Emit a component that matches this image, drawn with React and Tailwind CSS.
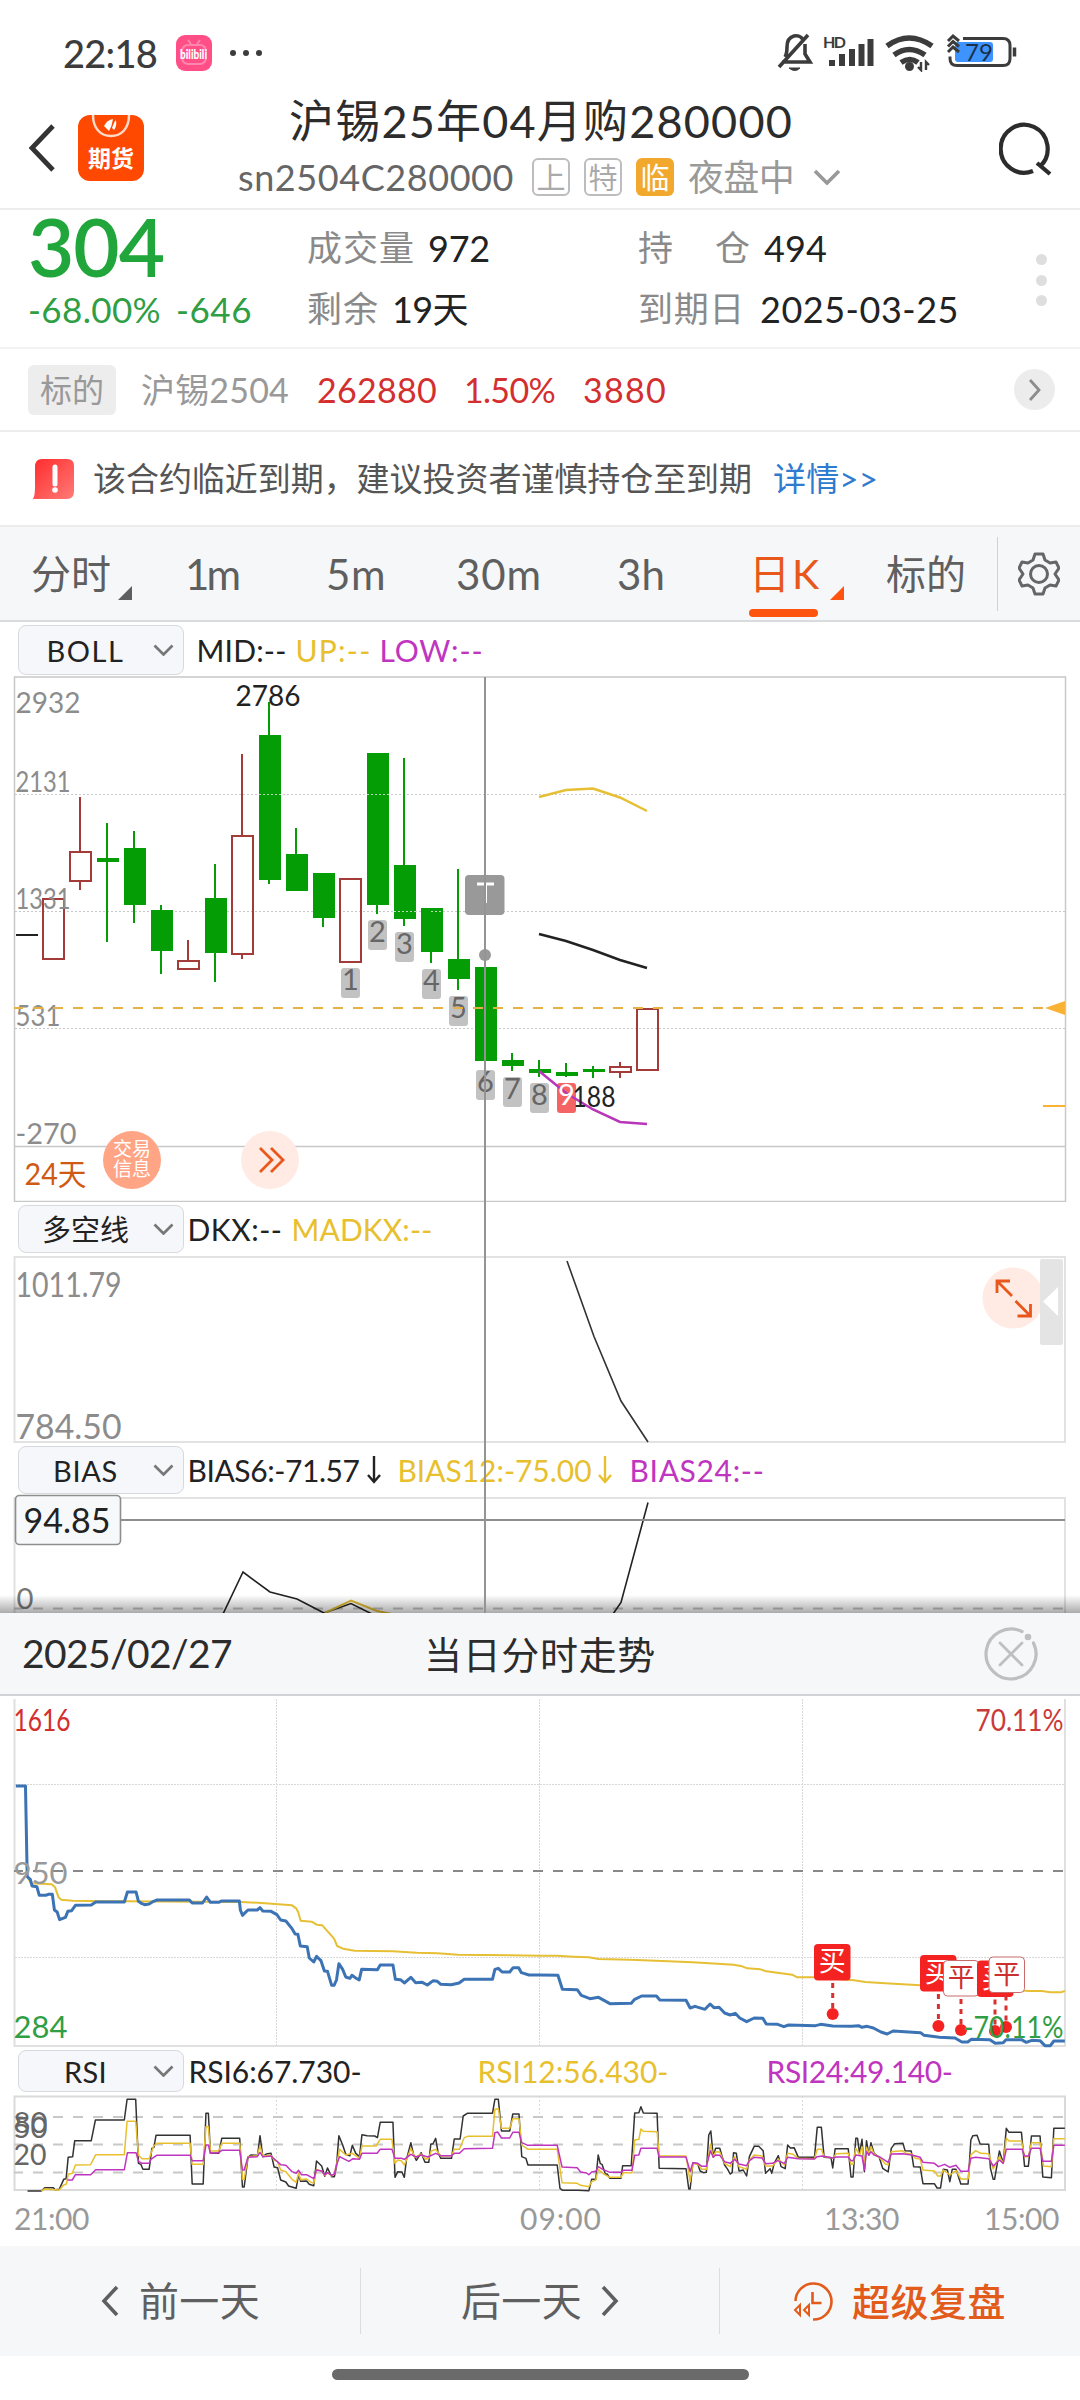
import React, { useLayoutEffect, useRef } from 'react';
import clsx from 'clsx';

// ===============================================
// CHART DATA
// ===============================================

// [center x, high, body top, body bottom, low, rising]
const CANDLES = [
  [53, 898, 898, 960, 960, true],
  [80, 797, 851, 882, 890, true],
  [107, 823, 858, 862, 942, false],
  [134, 831, 848, 905, 923, false],
  [161, 905, 910, 951, 974, false],
  [188, 940, 960, 970, 970, true],
  [215, 864, 898, 953, 982, false],
  [242, 754, 835, 955, 959, true],
  [269, 702, 735, 880, 884, false],
  [296, 828, 854, 891, 891, false],
  [323, 873, 873, 918, 927, false],
  [350, 878, 878, 963, 963, true],
  [377, 753, 753, 905, 914, false],
  [404, 758, 865, 919, 926, false],
  [431, 908, 908, 952, 963, false],
  [458, 869, 959, 979, 990, false],
  [485, 967, 967, 1061, 1061, false],
  [512, 1053, 1060, 1066, 1071, false],
  [539, 1060, 1069, 1073, 1077, false],
  [566, 1063, 1072, 1076, 1077, false],
  [593, 1066, 1069, 1072, 1078, false],
  [620, 1062, 1066, 1073, 1078, true],
  [647, 1008, 1008, 1071, 1071, true],
];

const COUNTS = [
  [350, 968], [377, 920], [404, 932], [431, 969], [458, 996],
  [485, 1070], [512, 1077], [539, 1083], [566, 1083],
];

const PRICE_NIGHT = '46,558 74,558 79,830 88,838 93,858 107,860 114,886 133,886 140,883 152,883 158,930 166,936 173,959 190,952 197,934 208,932 219,916 265,915 278,906 361,906 370,876 395,876 402,904 412,911 420,914 433,912 446,904 456,900 550,900 558,909 588,909 600,891 611,907 635,907 644,903 695,903 698,930 704,946 712,938 720,930 747,930 755,923 763,933 787,934 804,944 815,960 830,963 848,986 857,1002 865,1003 872,1038 892,1040 898,1074 911,1086 919,1069 932,1082 942,1113 951,1114 963,1156 970,1156 977,1140 984,1091 995,1108 1004,1131 1016,1135 1022,1126 1033,1134 1043,1140 1050,1108 1096,1109 1104,1095 1141,1095 1148,1138 1163,1139 1174,1149 1193,1132 1207,1148 1226,1147 1241,1155 1258,1142 1270,1144 1280,1153 1310,1154 1333,1149 1348,1138 1430,1138 1437,1108 1447,1105 1458,1116 1480,1116 1490,1103 1506,1103 1514,1118 1536,1125 1568,1125';
const PRICE_DAY = '0,1125 52,1126 65,1168 108,1169 120,1186 145,1196 170,1192 203,1211 265,1210 275,1198 295,1188 338,1188 348,1200 424,1201 436,1224 450,1219 479,1228 494,1212 505,1223 520,1222 536,1239 552,1245 567,1240 580,1254 600,1265 622,1254 647,1255 657,1272 690,1273 708,1280 722,1275 800,1277 815,1273 850,1278 905,1279 925,1277 935,1282 950,1279 968,1284 990,1296 1008,1302 1025,1293 1105,1298 1115,1306 1160,1312 1205,1314 1225,1326 1242,1326 1252,1318 1306,1319 1322,1330 1345,1328 1353,1319 1398,1319 1412,1327 1428,1321 1452,1322 1466,1337 1482,1337 1492,1323 1524,1323';
const AVG_NIGHT = '79,830 90,850 150,853 160,862 170,892 178,899 210,902 250,903 700,906 760,909 848,916 860,925 866,937 873,962 905,965 920,974 936,976 970,1016 979,1038 996,1046 1030,1052 1140,1054 1210,1058 1270,1060 1330,1064 1568,1067';
const AVG_DAY = '0,1067 50,1067 97,1070 142,1072 170,1077 262,1079 337,1082 442,1087 492,1090 562,1094 587,1099 602,1105 640,1108 657,1114 732,1124 747,1132 797,1132 912,1141 945,1146 1002,1150 1092,1155 1132,1158 1332,1168 1422,1173 1457,1173 1482,1177 1512,1177 1524,1173';

const RSI_LINES = [
  {
    color: '#333',
    night: '80,453 120,453 130,443 155,443 160,449 172,448 185,418 192,416 198,352 211,350 217,302 265,302 277,240 361,240 369,178 394,178 402,370 409,373 415,388 433,388 441,325 447,322 453,286 552,286 558,432 590,432 598,220 605,220 611,340 635,340 644,295 696,295 704,441 709,441 720,352 728,345 748,346 755,287 763,350 773,342 787,340 796,381 806,383 815,420 830,426 838,438 860,445 867,404 873,424 890,423 898,433 911,437 919,363 934,378 943,409 951,384 963,410 971,410 977,380 984,287 995,315 1004,343 1016,347 1023,316 1033,340 1044,350 1051,284 1066,287 1088,288 1096,293 1104,247 1141,247 1147,412 1155,395 1167,396 1174,412 1180,360 1193,308 1201,345 1209,361 1223,338 1234,367 1245,367 1251,312 1257,312 1265,295 1272,337 1280,355 1311,355 1319,297 1336,297 1345,228 1357,220 1430,220 1437,178 1447,178 1456,273 1480,273 1489,222 1507,222 1515,350 1527,355 1533,375 1568,375',
    day: '0,375 50,375 58,445 66,451 110,451 142,452 150,418 162,418 169,345 175,371 180,373 190,403 195,402 203,415 235,415 240,377 265,377 275,219 287,218 293,200 300,219 340,220 346,385 424,386 432,447 436,447 444,368 458,372 465,393 475,398 483,397 490,285 496,273 503,350 510,325 522,325 536,375 545,388 552,402 558,398 562,338 570,340 578,393 590,390 600,408 608,350 622,319 635,319 648,332 655,400 668,386 673,400 680,370 692,347 700,380 712,386 719,315 727,324 738,323 750,352 797,352 805,262 817,262 825,352 845,353 850,384 857,326 895,326 903,411 909,411 917,295 922,295 928,340 935,298 942,395 948,302 955,345 961,308 970,340 985,352 995,385 1011,396 1020,325 1030,311 1054,310 1060,332 1078,333 1085,380 1104,381 1112,431 1145,431 1153,444 1163,444 1171,388 1183,390 1190,425 1197,388 1208,388 1222,432 1243,432 1251,300 1257,287 1269,286 1278,312 1303,313 1308,385 1316,418 1320,418 1334,333 1345,370 1354,265 1362,277 1398,277 1407,379 1418,379 1427,288 1452,288 1460,411 1485,413 1492,265 1524,265',
  },
  {
    color: '#e8c02e',
    night: '120,453 130,447 160,449 172,450 185,435 193,432 198,403 210,400 219,375 263,374 278,344 361,344 369,244 394,244 402,345 412,356 433,356 446,318 456,310 552,310 558,373 590,373 598,260 605,260 611,333 635,333 644,310 696,310 704,418 709,418 720,350 747,347 755,318 763,348 787,346 796,360 806,365 815,390 830,395 848,418 860,427 867,400 873,419 890,417 900,425 911,430 919,388 934,394 943,407 951,398 963,408 971,402 977,375 986,328 1004,345 1023,340 1044,355 1051,318 1092,318 1104,298 1138,298 1147,370 1155,360 1165,362 1174,375 1183,353 1193,325 1205,352 1223,342 1236,358 1245,355 1252,333 1265,328 1280,348 1311,347 1319,328 1334,328 1348,293 1358,289 1430,289 1437,208 1447,206 1456,265 1480,265 1489,236 1507,236 1515,315 1533,328 1568,328',
    day: '0,328 50,328 64,428 108,430 118,436 142,440 150,425 162,420 169,388 185,402 203,412 235,412 242,398 267,398 275,300 287,298 293,267 300,274 340,275 346,348 424,348 436,425 444,370 460,374 470,388 483,388 495,312 503,352 510,335 522,336 536,370 552,380 565,350 578,380 600,388 608,360 622,345 645,348 655,378 675,378 692,358 710,375 719,340 735,343 750,355 797,356 805,328 817,328 825,350 852,354 860,341 895,340 903,373 909,373 917,325 928,345 935,320 942,372 948,322 955,340 961,320 970,342 985,352 1003,372 1011,374 1020,335 1052,332 1062,340 1080,342 1090,355 1104,357 1112,390 1145,393 1155,408 1163,408 1171,390 1190,405 1208,392 1222,417 1243,417 1251,345 1265,332 1280,340 1303,341 1316,387 1334,350 1345,370 1354,295 1362,303 1398,303 1407,350 1418,350 1427,308 1452,308 1462,378 1485,380 1492,296 1524,296',
  },
  {
    color: '#c035c0',
    night: '196,420 210,420 219,404 263,404 278,389 361,389 370,338 395,338 402,364 412,370 433,370 438,358 455,346 552,346 558,362 590,362 598,315 605,315 611,340 635,338 644,331 696,331 704,390 709,390 720,352 747,350 755,337 763,350 787,348 800,360 815,374 830,376 848,395 860,400 867,391 875,404 890,404 911,416 919,390 934,393 943,405 951,398 963,406 971,402 977,375 986,350 1013,364 1025,356 1044,358 1051,340 1095,340 1104,328 1138,328 1147,355 1165,355 1174,358 1193,343 1209,351 1223,345 1242,351 1265,340 1280,347 1311,347 1319,340 1334,340 1348,326 1430,325 1437,278 1445,276 1456,294 1480,294 1489,277 1507,277 1515,308 1533,316 1568,316',
    day: '0,316 50,316 64,381 108,383 118,396 135,399 142,404 150,396 162,394 169,380 182,388 203,397 235,397 242,391 267,391 275,346 287,345 293,325 340,325 346,351 424,351 436,395 444,368 458,370 470,379 483,379 495,332 503,352 510,345 522,346 536,365 552,370 565,358 578,372 600,377 608,362 622,352 645,354 655,371 675,370 690,362 710,370 719,352 750,356 797,357 805,350 820,348 850,354 860,351 895,351 903,362 909,362 917,345 935,348 942,390 948,335 955,345 961,335 970,345 985,350 1011,367 1020,342 1052,341 1080,345 1104,352 1112,367 1145,370 1157,380 1175,373 1190,382 1208,376 1222,394 1243,394 1251,355 1265,352 1303,356 1316,378 1334,360 1345,370 1354,328 1400,328 1407,348 1418,348 1427,325 1452,325 1460,364 1485,364 1492,316 1524,316',
  },
];

// Trades of the day: [box x, box y, dot x, dot y, label]
const TRADES = [
  [814, 1944, 832.7, 2014, '买'],
  [920, 1955, 938.4, 2026, '买'],
  [943, 1960, 961, 2030, '平'],
  [977, 1960.5, 995, 2031, '买'],
  [988.5, 1956.5, 1006, 2027, '平'],
];

// ===============================================
// SHARED PIECES
// ===============================================

// One line of text, tracked so that it fills the given width
const Fit = ({ w, className, children }) => {
  const ref = useRef(null);

  useLayoutEffect(() => {
    const el = ref.current;
    el.style.width = 'auto';
    el.style.letterSpacing = '0px';
    const natural = el.getBoundingClientRect().width;
    const count = Array.from(el.textContent).length;
    el.style.letterSpacing = `${(w - natural) / count}px`;
    el.style.width = `${w}px`;
  }, [w, children]);

  return (
    <span ref={ref} className={clsx('inline-block shrink-0 whitespace-pre leading-none', className)}>
      {children}
    </span>
  );
};

const Label = ({ x, y, w, size = 29, fill = '#8c8c8c', children }) => (
  <text x={x - 1.5} y={y} fontSize={size} fill={fill} textLength={w + 1} lengthAdjust="spacingAndGlyphs">{children}</text>
);

const ChevronDown = ({ className }) => (
  <svg viewBox="0 0 28 16" className={className} fill="none" stroke="currentColor" strokeWidth="3.6">
    <path d="M2 2l12 12L26 2" />
  </svg>
);

const DownArrow = ({ className }) => (
  <svg viewBox="0 0 16 28" className={clsx('w-4 shrink-0', className)} fill="none" stroke="currentColor" strokeWidth="2.400">
    <path d="M8 0v26M2 19l6 7 6-7" />
  </svg>
);

const IndicatorRow = ({ name, nameWidth, className, children }) => (
  <div className={clsx('flex items-center pl-[17.5px] text-[30px] text-[#222]', className)}>
    <div className="flex h-full w-[166px] shrink-0 items-center rounded-lg border border-[#d6d9de] bg-[#f6f7fa] pr-[9px]">
      <div className="flex flex-1 justify-center">
        <Fit w={nameWidth} className="text-[29px]">{name}</Fit>
      </div>
      <ChevronDown className="w-[21px] text-[#777]" />
    </div>
    {children}
  </div>
);

// ===============================================
// HEADER
// ===============================================

const StatusBar = () => (
  <div className="flex h-[105px] items-center pr-[61px] pl-[63px] text-[#3c3c3c]">
    <Fit w={94} className="text-[38px] font-medium">22:18</Fit>
    <svg viewBox="0 0 36 36" className="ml-[19px] w-9">
      <rect width="36" height="36" rx="9" fill="#ff4f86" />
      <g fill="none" stroke="#ff86ae" strokeWidth="2">
        <rect x="6" y="10" width="24" height="19" rx="6" />
        <path d="M12 5l3 4M24 5l-3 4" />
      </g>
      <text x="4" y="24" fontSize="13" fontWeight="900" fill="#fff" textLength="27" lengthAdjust="spacingAndGlyphs">bilibili</text>
    </svg>
    <div className="ml-[18px] flex gap-[7px]">
      <i className="size-[6px] rounded-full bg-[#3c3c3c]" />
      <i className="size-[6px] rounded-full bg-[#3c3c3c]" />
      <i className="size-[6px] rounded-full bg-[#3c3c3c]" />
    </div>
    <svg viewBox="778 34 240 39" className="mr-[2px] ml-auto h-[39px] w-[240px]" fill="none" stroke="#3c3c3c">
      {/* muted bell */}
      <path d="M783 63h28l-5-8v-10M786 58c2-3 2-7 2-10 0-13 13-14 16-7M780 68l29-32" strokeWidth="3.6" />
      <path d="M790 69h11q-5 5-11 0z" fill="#3c3c3c" strokeWidth="1" />
      {/* signal */}
      <text x="824" y="49" fontSize="16" fontWeight="700" fill="#3c3c3c" stroke="none" textLength="23">HD</text>
      <path d="M833 67v-6M843 67V55M853 67V50M862.500 67V45M871.500 67V40" strokeWidth="6" />
      {/* wifi */}
      <path d="M888 47q22-16 45 0M895 56q15-11 31 0M902 63.500q9-6 17 0" strokeWidth="5.500" />
      <circle cx="910.500" cy="67.500" r="4.500" fill="#3c3c3c" stroke="none" />
      <path d="M922 63v8l-3-3M927 71v-8l3 3" strokeWidth="2.400" />
      {/* battery */}
      <rect x="956" y="43" width="38" height="20" rx="3" fill="#3d94ff" stroke="none" />
      <path d="M964 39.500h40q7 0 7 7v13q0 7-7 7h-46q-7 0-7-7v-2" strokeWidth="3" />
      <path d="M1015.500 48.500v9" strokeWidth="3.500" />
      <path d="M949 42l5-5 6 5M949 47.500l5-5 6 5M949 53l5-5 6 5" strokeWidth="3" />
      <text x="966" y="61.500" fontSize="24" fill="#1c2f4a" stroke="none" textLength="28">79</text>
    </svg>
  </div>
);

const Badge = ({ children, active }) => (
  <span
    className={clsx(
      'flex size-[38px] shrink-0 items-center justify-center rounded-md text-[29px] leading-none',
      active ? 'bg-[#f2a82c] text-white' : 'border-2 border-[#bdbdbd] text-[#aaa]'
    )}
  >
    {children}
  </span>
);

const TitleBar = () => (
  <div className="flex h-[105px] items-start border-b-2 border-[#ececec]">
    <svg viewBox="0 0 28 48" className="mt-[19px] ml-7 w-7" fill="none" stroke="#333" strokeWidth="4.800">
      <path d="M25 2L4 24l21 22" />
    </svg>
    <svg viewBox="0 0 66 66" className="mt-[10px] ml-[22px] w-[66px]">
      <rect width="66" height="66" rx="12" fill="#ff4800" />
      <path d="M15 0c0 14 8 21 18 21S51 14 51 0" fill="none" stroke="#ffd9c8" strokeWidth="2.500" />
      <path d="M26 11q3-6 9-7-1 7-4 12z" fill="#fff" />
      <path d="M34 13q2-6 4-8 1 6-2 10z" fill="#fff" />
      <text x="10" y="52" fontSize="23" fontWeight="700" fill="#fff" textLength="46">期货</text>
    </svg>
    <div className="ml-[94px] w-[610px] shrink-0">
      <div className="flex h-[32px] items-center pl-[51px]">
        <Fit w={504} className="text-[45px] text-[#2c2c2c]">沪锡25年04月购280000</Fit>
      </div>
      <div className="mt-[20px] flex h-[40px] items-center">
        <Fit w={276} className="text-[36px] text-[#666]">sn2504C280000</Fit>
        <div className="ml-[18px] flex gap-[14px]">
          <Badge>上</Badge>
          <Badge>特</Badge>
          <Badge active>临</Badge>
        </div>
        <Fit w={106} className="ml-[14px] text-[36px] text-[#999]">夜盘中</Fit>
        <ChevronDown className="ml-[19px] w-7 text-[#999]" />
      </div>
    </div>
    <svg viewBox="0 0 54 54" className="mt-[17px] ml-auto mr-[27px] w-[54px]" fill="none" stroke="#2c2c2c" strokeWidth="4.200">
      <path d="M34 49A23.500 24 0 1 1 41 44.500M38 41l13 11" />
    </svg>
  </div>
);

const Quote = () => (
  <div className="flex h-[139px] border-b-2 border-[#f3f3f3] text-[36px]">
    <div className="w-[307px] shrink-0 pl-[28px] text-[#21a63c]">
      <Fit w={136} className="-mt-[4px] block text-[80px] font-semibold">304</Fit>
      <div className="mt-[2px] flex gap-[15px] text-[35px] text-[#2f9e44]">
        <Fit w={133}>-68.00%</Fit>
        <Fit w={76}>-646</Fit>
      </div>
    </div>
    <div className="grid w-[331px] shrink-0 grid-rows-[36px_36px] content-start gap-y-[25px] pt-[20px] text-[#222]">
      <div className="flex gap-[13px]"><Fit w={108} className="text-[35px] text-[#8a8a8a]">成交量</Fit><Fit w={62}>972</Fit></div>
      <div className="flex gap-[13px]"><Fit w={72} className="text-[35px] text-[#8a8a8a]">剩余</Fit><Fit w={76}>19天</Fit></div>
    </div>
    <div className="grid grid-rows-[36px_36px] content-start gap-y-[25px] pt-[20px] text-[#222]">
      <div className="flex">
        <Fit w={36} className="text-[35px] text-[#8a8a8a]">持</Fit>
        <Fit w={36} className="ml-[41px] text-[35px] text-[#8a8a8a]">仓</Fit>
        <Fit w={63} className="ml-[13px]">494</Fit>
      </div>
      <div className="flex gap-[15px]"><Fit w={107} className="text-[35px] text-[#8a8a8a]">到期日</Fit><Fit w={199}>2025-03-25</Fit></div>
    </div>
    <div className="mt-[44px] mr-[33px] ml-auto flex flex-col gap-[9.500px]">
      <i className="size-[11px] rounded-full bg-[#dedede]" />
      <i className="size-[11px] rounded-full bg-[#dedede]" />
      <i className="size-[11px] rounded-full bg-[#dedede]" />
    </div>
  </div>
);

const Underlying = () => (
  <div className="flex h-[83px] items-center border-b-2 border-[#ececec] pl-7 text-[34px] text-[#d32f2f]">
    <span className="flex h-[50px] w-[88px] items-center justify-center rounded-md bg-[#ededed] text-[32px] leading-none text-[#999]">标的</span>
    <Fit w={148} className="ml-[25px] text-[#999]">沪锡2504</Fit>
    <Fit w={120} className="ml-[28px]">262880</Fit>
    <Fit w={91} className="ml-[27px]">1.50%</Fit>
    <Fit w={84} className="ml-[28px]">3880</Fit>
    <span className="mr-[25px] ml-auto flex size-[41px] items-center justify-center rounded-full bg-[#ececec]">
      <svg viewBox="0 0 12 22" className="w-3" fill="none" stroke="#8c8c8c" strokeWidth="2.800"><path d="M1 1l9 10-9 10" /></svg>
    </span>
  </div>
);

const Notice = () => (
  <div className="flex h-[93px] items-center pl-[33px] text-[33px] text-[#555]">
    <svg viewBox="0 0 41 40" className="w-[41px]">
      <defs>
        <linearGradient id="alert" x1="0" y1="0" x2="1" y2="1">
          <stop offset="0" stopColor="#ff2b2b" />
          <stop offset="1" stopColor="#ff7b78" />
        </linearGradient>
      </defs>
      <path d="M9 0h25q7 0 7 7v25q0 8-7 8H0q2-4 2-10V8q0-8 7-8z" fill="url(#alert)" />
      <path d="M22 8v17" stroke="#fff" strokeWidth="5" strokeLinecap="round" />
      <circle cx="22" cy="31" r="2.800" fill="#fff" />
    </svg>
    <Fit w={659} className="ml-[19px]">该合约临近到期，建议投资者谨慎持仓至到期</Fit>
    <Fit w={105} className="ml-[21px] text-[#2f7bd0]">{'详情>>'}</Fit>
  </div>
);

const Corner = ({ className }) => (
  <svg viewBox="0 0 14 14" className={clsx('mt-[39px] w-[14px]', className)}><path d="M14 0v14H0z" fill="currentColor" /></svg>
);

const PeriodTabs = () => (
  <div className="flex h-[97px] items-center border-y-2 border-[#d9dbde] border-t-[#ececec] bg-[#f6f7f9] pl-[31px] text-[42px] text-[#5f5f5f]">
    <Fit w={80} className="text-[40px]">分时</Fit>
    <Corner className="ml-[7px]" />
    <Fit w={53} className="ml-[53px]">1m</Fit>
    <Fit w={60} className="ml-[88px]">5m</Fit>
    <Fit w={86} className="ml-[70px]">30m</Fit>
    <Fit w={48} className="ml-[75px]">3h</Fit>
    <div className="relative ml-[84px] text-[#e8571b]">
      <Fit w={72} className="text-[41px]">日K</Fit>
      <i className="absolute top-[67px] left-0 h-[8px] w-[69px] rounded-full bg-[#ff5310]" />
    </div>
    <Corner className="ml-[9px] text-[#ff5310]" />
    <Fit w={80} className="ml-[42px] text-[40px]">标的</Fit>
    <i className="ml-[31px] h-[74px] w-px bg-[#cfd1d4]" />
    <svg viewBox="0 0 42 44" className="ml-[20px] w-[42px]" fill="none" stroke="#666" strokeWidth="3" strokeLinejoin="round">
      <path d="M17 2h8l2 6 5 3 6-1 3 6-4 6 4 6-3 6-6-1-5 3-2 6h-8l-2-6-5-3-6 1-3-6 4-6-4-6 3-6 6 1 5-3z" />
      <circle cx="21" cy="22" r="8.500" />
    </svg>
  </div>
);

// ===============================================
// DAILY CHARTS
// ===============================================

const CandleChart = () => (
  <svg viewBox="0 676 1080 526" className="block h-[526px] w-full" fill="none">
    <g stroke="#c8c8c8" strokeWidth="1.500">
      <rect x="14.500" y="677" width="1051" height="524.500" />
      <path d="M14 1146.500h1051" />
      <path d="M15 794.500h1050M15 911.500h1050M15 1028.500h1050" strokeWidth="1" strokeDasharray="2 2" />
    </g>
    <path d="M16 935h22" stroke="#222" strokeWidth="2" />
    {CANDLES.map(([x, high, top, bottom, low, up]) => (
      up ? (
        <g key={x} stroke="#a33b38" strokeWidth="2">
          <path d={`M${x} ${high}V${top}M${x} ${bottom}V${low}`} />
          <rect x={x - 10} y={top + 1} width="21" height={bottom - top - 2} />
        </g>
      ) : (
        <g key={x} fill="#059d05">
          <rect x={x - 1} y={high} width="2" height={low - high} />
          <rect x={x - 10} y={top} width="22" height={bottom - top} />
        </g>
      )
    ))}
    <path d="M259 794.500h22M367 794.500h22M394 911.500h22M431 911.500h12" stroke="#b8dcb8" strokeDasharray="2 2" />
    <Label x={17} y={713} w={64}>2932</Label>
    <Label x={17} y={792} w={54}>2131</Label>
    <Label x={17} y={909} w={54}>1331</Label>
    <Label x={17} y={1026} w={44}>531</Label>
    <Label x={17} y={1143.500} w={60}>-270</Label>
    <Label x={237} y={706} w={64} fill="#222">2786</Label>
    <polyline points="539,797 566,790 593,788.500 620,797.500 647,811" stroke="#e6bf35" strokeWidth="2.500" />
    <polyline points="539,934 566,941 593,950 620,960 647,968" stroke="#222" strokeWidth="2.500" />
    {COUNTS.map(([x, y], i) => (
      <rect key={x} x={x - 9} y={y} width="19" height="30" rx="3" fill={i === 8 ? '#f56464' : '#c2c2c2'} />
    ))}
    <polyline points="539,1071 566,1093 593,1109.500 620,1122 647,1124" stroke="#b836b8" strokeWidth="2.500" />
    {COUNTS.map(([x, y], i) => (
      <text key={x} x={x + 0.5} y={y + 22} fontSize="29" textAnchor="middle" fill={i === 8 ? '#fff' : '#666'}>{i + 1}</text>
    ))}
    <Label x={574} y={1107} w={42} fill="#222">188</Label>
    <path d="M14 1008h1034" stroke="#e6b143" strokeWidth="2" strokeDasharray="10 10" strokeDashoffset="1" />
    <path d="M1065 1001v14l-20-7zM1043 1105h22v2h-22z" fill="#f9b233" />
    <rect x="465" y="875" width="39.500" height="40" rx="4" fill="#999" />
    <path d="M477 884h17M485.500 884v19" stroke="#fff" strokeWidth="3" />
    <circle cx="485" cy="955" r="6" fill="#999" />
    <Label x={26} y={1185} w={61} size={30} fill="#cf5a14">24天</Label>
    <circle cx="132" cy="1160" r="29" fill="#ffa585" />
    <g fontSize="19" fill="#fff">
      <text x="113" y="1156" textLength="38">交易</text>
      <text x="113" y="1176" textLength="38">信息</text>
    </g>
    <circle cx="270" cy="1160" r="29" fill="#ffebe4" />
    <path d="M260 1148l12 12-12 12M271 1148l12 12-12 12" stroke="#e8571b" strokeWidth="2.800" />
  </svg>
);

const DkxChart = () => (
  <svg viewBox="0 1256 1080 187" className="block h-[187px] w-full overflow-visible" fill="none">
    <rect x="14.500" y="1257" width="1050.500" height="185" stroke="#e2e2e2" strokeWidth="2" />
    <Label x={17} y={1297} w={105} size={34}>1011.79</Label>
    <Label x={17} y={1439} w={105} size={34}>784.50</Label>
    <polyline points="567,1261 594,1336.500 621,1401 648,1442" stroke="#333" strokeWidth="1.600" />
    <circle cx="1013" cy="1298" r="30.500" fill="#ffebe4" />
    <path d="M1012 1296l-15-15M997 1293v-12h13M1015.500 1301l15 15M1030.500 1304v12h-13" stroke="#e8571b" strokeWidth="2.800" />
    <rect x="1040" y="1259" width="23" height="86" rx="2" fill="#e4e4e4" />
    <path d="M1058 1287v29l-15-14.500z" fill="#fff" />
  </svg>
);

const BiasChart = () => (
  <svg viewBox="0 1494 1080 119" className="block h-[119px] w-full" fill="none">
    <defs>
      <linearGradient id="shade" x1="0" y1="0" x2="0" y2="1">
        <stop offset="0" stopColor="#000" stopOpacity="0" />
        <stop offset="1" stopColor="#000" stopOpacity="0.330" />
      </linearGradient>
    </defs>
    <path d="M14.500 1613V1498H1065v115" stroke="#e2e2e2" strokeWidth="2" />
    <path d="M14 1608.500h1051" stroke="#c4c4c4" strokeWidth="2" strokeDasharray="10 10" strokeDashoffset="1" />
    <Label x={18} y={1609} w={16} fill="#777">0</Label>
    <polyline points="223,1614 243,1572 270,1592 297,1599 324,1613 351,1603.500 372,1614" stroke="#222" strokeWidth="1.600" />
    <polyline points="325,1613 351,1600.500 377,1611 392,1614" stroke="#dfb92f" strokeWidth="2" />
    <polyline points="613,1614 621,1602.500 648,1502.500" stroke="#222" strokeWidth="1.600" />
    <path d="M120 1520h945" stroke="#8e8e8e" strokeWidth="2" />
    <rect x="15.500" y="1495.500" width="105" height="49" rx="4" fill="#f7f8fa" stroke="#8e8e8e" strokeWidth="1.600" />
    <Label x={25} y={1533} w={86} size={34} fill="#222">94.85</Label>
    <rect x="0" y="1595" width="1080" height="18" fill="url(#shade)" />
  </svg>
);

const DailyCharts = () => (
  <div className="relative">
    <IndicatorRow name="BOLL" nameWidth={78} className="h-[54px] pt-[3px] pb-[1px]">
      <Fit w={90} className="ml-[13px]">MID:--</Fit>
      <Fit w={76} className="ml-[9px] text-[#e8c02e]">UP:--</Fit>
      <Fit w={104} className="ml-[8px] text-[#c035c0]">LOW:--</Fit>
    </IndicatorRow>
    <CandleChart />
    <IndicatorRow name="多空线" nameWidth={87} className="h-[54px] pt-[3px] pb-[3px]">
      <Fit w={95} className="ml-[4px]">DKX:--</Fit>
      <Fit w={141} className="ml-[9px] text-[#e8c02e]">MADKX:--</Fit>
    </IndicatorRow>
    <DkxChart />
    <IndicatorRow name="BIAS" nameWidth={65} className="h-[51px] pt-[3px]">
      <Fit w={172} className="ml-[4px]">BIAS6:-71.57</Fit>
      <DownArrow className="ml-[6px]" />
      <Fit w={194} className="ml-[16px] text-[#e8c02e]">BIAS12:-75.00</Fit>
      <DownArrow className="ml-[5px] text-[#e8c02e]" />
      <Fit w={135} className="ml-[17px] text-[#c035c0]">BIAS24:--</Fit>
    </IndicatorRow>
    <BiasChart />
    {/* crosshair runs through all three charts */}
    <i className="absolute top-[55px] bottom-0 left-[484px] w-[2px] bg-[#949494]" />
  </div>
);

// ===============================================
// INTRADAY PANEL
// ===============================================

const PanelHeader = () => (
  <div className="flex h-[83px] items-center border-b-2 border-[#cfd2d6] bg-[#f6f7f9] pl-[22px] text-[39px] text-[#2c2c2c]">
    <Fit w={210}>2025/02/27</Fit>
    <Fit w={232} className="ml-[192px] text-[38px]">当日分时走势</Fit>
    <svg viewBox="0 0 56 56" className="mr-[41px] ml-auto w-14" fill="none" stroke="#bfbfbf" strokeWidth="3.200" strokeLinecap="round">
      <path d="M39 5.500A25 25 0 1 0 50.500 17" />
      <path d="M17 17l22 22M39 17L17 39" strokeWidth="2.800" />
      <circle cx="45" cy="11" r="3.300" fill="#bfbfbf" stroke="none" />
    </svg>
  </div>
);

const IntradayChart = () => (
  <svg viewBox="0 1696 1080 352" className="block h-[352px] w-full" fill="none">
    <path d="M14.500 1699v347H1065v-347" stroke="#e0e0e0" strokeWidth="2" />
    <path d="M276.500 1699v347M539.500 1699v347M802.500 1699v347M15 1784.500h1050M15 1957.500h1050" stroke="#d8d8d8" strokeDasharray="2 1" />
    <path d="M14 1871h1051" stroke="#888" strokeWidth="2" strokeDasharray="10 10" strokeDashoffset="1" />
    <Label x={15} y={1731} w={56} size={30} fill="#d32f2f">1616</Label>
    <Label x={977} y={1731} w={87} size={30} fill="#c93a3a">70.11%</Label>
    <g strokeLinejoin="round">
      <g transform="translate(0 1600) scale(.34439 .33333)">
        <polyline points={AVG_NIGHT} stroke="#e6bf35" strokeWidth="2" vectorEffect="non-scaling-stroke" />
        <polyline points={PRICE_NIGHT} stroke="#3c73b4" strokeWidth="3" vectorEffect="non-scaling-stroke" />
      </g>
      <g transform="translate(540 1600) scale(.34439 .33333)">
        <polyline points={AVG_DAY} stroke="#e6bf35" strokeWidth="2" vectorEffect="non-scaling-stroke" />
        <polyline points={PRICE_DAY} stroke="#3c73b4" strokeWidth="3" vectorEffect="non-scaling-stroke" />
      </g>
    </g>
    <Label x={15} y={1884} w={53} size={30} fill="#999">950</Label>
    <Label x={15} y={2037.500} w={53} size={30} fill="#2f9e44">284</Label>
    {TRADES.map(([x, y, dx, dy, label]) => (
      <g key={x}>
        <path d={`M${dx} ${y + 39}V${dy}`} stroke="#d93030" strokeWidth="3" strokeDasharray="5 5" />
        <circle cx={dx} cy={dy} r="6" fill="#f52222" />
        {label === '买'
          ? <rect x={x} y={y} width="36.500" height="36.500" rx="4" fill="#f52222" />
          : <rect x={x + 0.5} y={y + 0.5} width="35.500" height="35.500" rx="4" fill="#fff" stroke="#c96a6a" />}
        <text x={x + 18.3} y={y + 27} fontSize="27" textAnchor="middle" fill={label === '买' ? '#fff' : '#cc2f2f'}>{label}</text>
      </g>
    ))}
    <Label x={965} y={2037.500} w={99} size={30} fill="#2f9e44">-70.11%</Label>
  </svg>
);

const RsiChart = () => (
  <svg viewBox="0 2095 1080 97" className="block h-[97px] w-full" fill="none">
    <rect x="14.500" y="2096.500" width="1050.500" height="93.500" stroke="#dadada" strokeWidth="2" />
    <path d="M276.500 2096v94M539.500 2096v94M802.500 2096v94" stroke="#d8d8d8" strokeDasharray="2 2" />
    <path d="M14 2117h1051M14 2144.500h1051M14 2172.500h1051" stroke="#c8c8c8" strokeWidth="2" strokeDasharray="10 10" strokeDashoffset="1" />
    <Label x={15} y={2133} w={33} fill="#666">80</Label>
    <Label x={15} y={2137.500} w={33} fill="#666">50</Label>
    <Label x={15} y={2165} w={32} fill="#666">20</Label>
    {RSI_LINES.map(({ color, night, day }) => (
      <g key={color} stroke={color} strokeWidth="1.500" strokeLinejoin="round">
        <g transform="translate(0 2040) scale(.34439 .33333)"><polyline points={night} vectorEffect="non-scaling-stroke" /></g>
        <g transform="translate(540 2040) scale(.34439 .33333)"><polyline points={day} vectorEffect="non-scaling-stroke" /></g>
      </g>
    ))}
  </svg>
);

const IntradayPanel = () => (
  <div>
    <PanelHeader />
    <IntradayChart />
    <IndicatorRow name="RSI" nameWidth={43} className="h-[47px] pt-[2px] pb-[3px]">
      <Fit w={173} className="ml-[5px]">RSI6:67.730-</Fit>
      <Fit w={191} className="ml-[116px] text-[#e8c02e]">RSI12:56.430-</Fit>
      <Fit w={186} className="ml-[98px] text-[#c035c0]">RSI24:49.140-</Fit>
    </IndicatorRow>
    <RsiChart />
    <div className="flex h-[54px] items-center pb-[3px] pl-[14px] text-[30px] text-[#999]">
      <Fit w={75}>21:00</Fit>
      <Fit w={82} className="ml-[431px]">09:00</Fit>
      <Fit w={75} className="ml-[222px]">13:30</Fit>
      <Fit w={75} className="ml-[85px]">15:00</Fit>
    </div>
  </div>
);

const ReplayBar = () => (
  <div className="flex h-[110px] items-center bg-[#f6f7f9] text-[40px] text-[#5f5f5f]">
    <div className="flex w-[360px] shrink-0 items-center pl-[101px]">
      <svg viewBox="0 0 18 30" className="w-[18px]" fill="none" stroke="currentColor" strokeWidth="3.600"><path d="M16 1L3 15l13 14" /></svg>
      <Fit w={121} className="ml-[20px]">前一天</Fit>
    </div>
    <i className="h-[66px] w-px bg-[#dcdde0]" />
    <div className="flex w-[358px] shrink-0 items-center pl-[100px]">
      <Fit w={121}>后一天</Fit>
      <svg viewBox="0 0 18 30" className="ml-[19px] w-[18px]" fill="none" stroke="currentColor" strokeWidth="3.600"><path d="M2 1l13 14L2 29" /></svg>
    </div>
    <i className="h-[66px] w-px bg-[#dcdde0]" />
    <div className="flex flex-1 items-center pl-[73px] text-[#e35b1a]">
      <svg viewBox="0 0 40 40" className="w-10" fill="none" stroke="currentColor" strokeWidth="2.600">
        <path d="M2.500 20A18 18 0 1 1 20 38.500M19.500 11v11h9" />
        <path d="M7 24v10l-5-5zM16 24v10l-5-5z" strokeWidth="2" />
      </svg>
      <Fit w={154} className="ml-[19px] text-[38px] font-medium">超级复盘</Fit>
    </div>
  </div>
);

// ===============================================
// PAGE
// ===============================================

const App = () => (
  <div className="h-[2400px] w-[1080px] overflow-hidden bg-white font-[Lato,'Noto_Sans_CJK_SC',sans-serif]">
    <StatusBar />
    <TitleBar />
    <Quote />
    <Underlying />
    <Notice />
    <PeriodTabs />
    <DailyCharts />
    <IntradayPanel />
    <ReplayBar />
    <div className="flex justify-center pt-[13px]">
      <i className="h-[11px] w-[417px] rounded-full bg-[#6a6a6a]" />
    </div>
  </div>
);

export default App;
